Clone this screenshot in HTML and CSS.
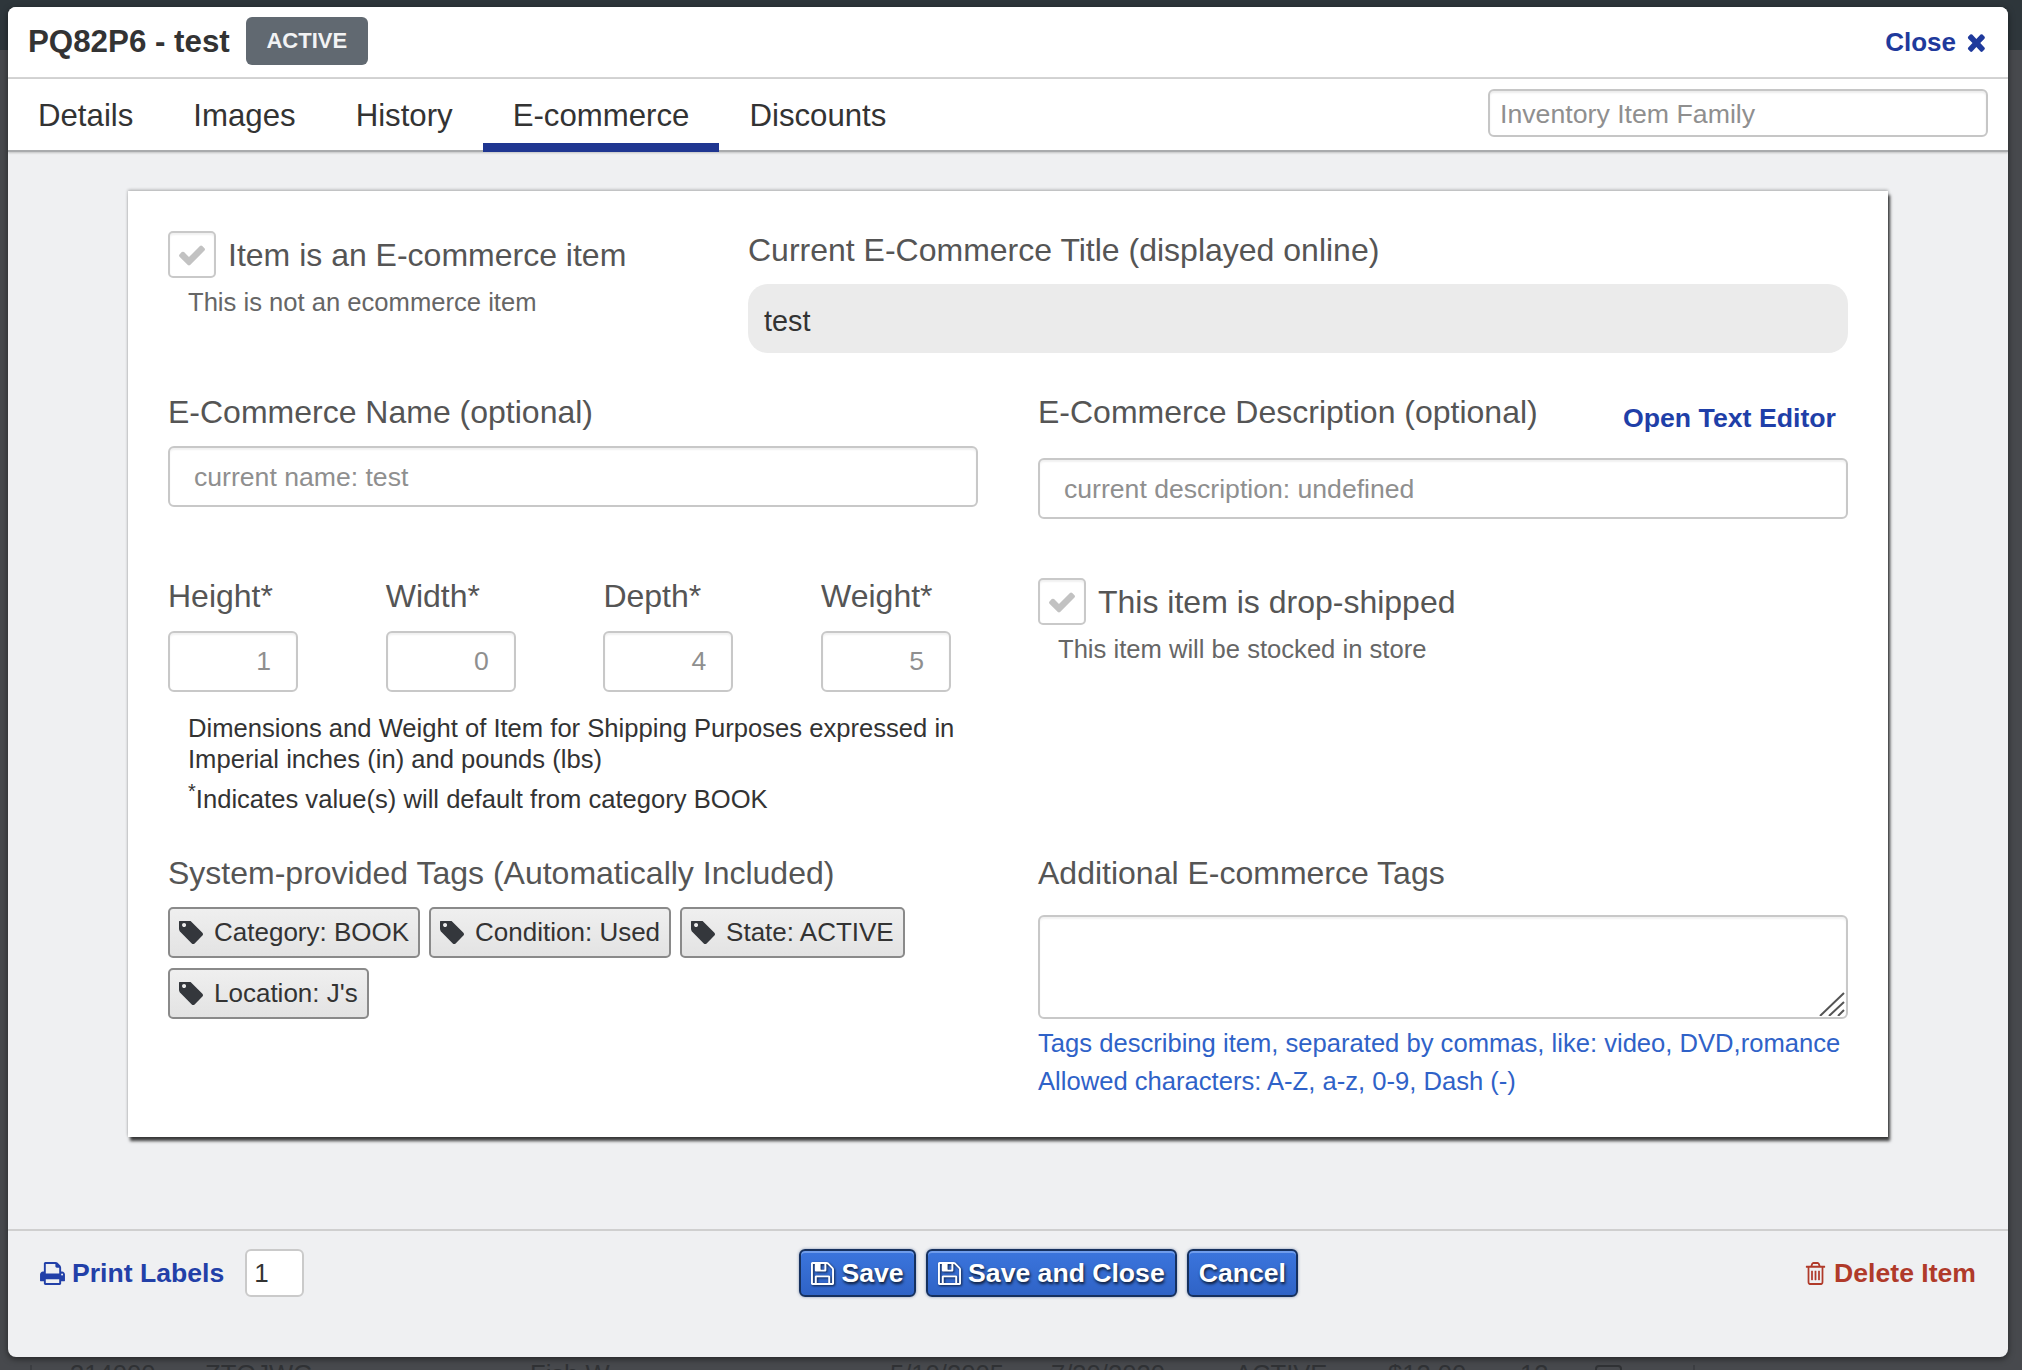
FILE: index.html
```html
<!DOCTYPE html>
<html lang="en">
<head>
  <meta charset="UTF-8">
  <meta name="viewport" content="width=device-width, initial-scale=1.0">
  <link rel="stylesheet" href="styles.css">
  <title>PQ82P6 - test</title>
</head>
<body>
  <!-- page behind the modal -->
  <div class="backdrop">
    <div class="topbar"></div>
    <div class="listRow">
      <span class="cellId">314000</span>
      <span class="cellSku">ZTQJWG</span>
      <span class="cellName">Fish W</span>
      <span class="cellDate">5/10/2005</span>
      <span class="cellDate2">7/30/2020</span>
      <span class="cellState">ACTIVE</span>
      <span class="cellPrice">$12.00</span>
      <span class="cellQty">12</span>
      <span class="cellBox"></span>
    </div>
  </div>

  <div class="modal">
    <div class="modalHeader">
      <h1 class="itemTitle">PQ82P6 - test</h1>
      <span class="badge">ACTIVE</span>
      <a class="closeLink">Close
        <svg class="icon closeIcon" viewBox="240 290 1260 1270" preserveAspectRatio="none"><path d="M1490 1322q0 40-28 68l-136 136q-28 28-68 28t-68-28l-294-294-294 294q-28 28-68 28t-68-28l-136-136q-28-28-28-68t28-68l294-294-294-294q-28-28-28-68t28-68l136-136q28-28 68-28t68 28l294 294 294-294q28-28 68-28t68 28l136 136q28 28 28 68t-28 68l-294 294 294 294q28 28 28 68z"/></svg>
      </a>
    </div>

    <div class="tabBar">
      <a class="tab">Details</a>
      <a class="tab">Images</a>
      <a class="tab">History</a>
      <a class="tab active">E-commerce</a>
      <a class="tab">Discounts</a>
      <input class="familyInput" placeholder="Inventory Item Family" type="text">
    </div>

    <div class="modalBody">
      <div class="card">
        <div class="topRow">
          <div>
            <div class="checkRow">
              <span class="checkBox">
                <svg class="icon" viewBox="0 0 1792 1792"><path d="M1671 566q0 40-28 68l-724 724-136 136q-28 28-68 28t-68-28l-136-136-362-362q-28-28-28-68t28-68l136-136q28-28 68-28t68 28l294 295 656-657q28-28 68-28t68 28l136 136q28 28 28 68z"/></svg>
              </span>
              <span class="fieldLabel">Item is an E-commerce item</span>
            </div>
            <div class="checkNote">This is not an ecommerce item</div>
          </div>
          <div class="titleCol">
            <div class="fieldLabel">Current E-Commerce Title (displayed online)</div>
            <div class="readonlyTitle">test</div>
          </div>
        </div>

        <div class="formGrid">
          <div class="nameCol">
            <div class="fieldLabel">E-Commerce Name (optional)</div>
            <input class="textInput nameInput" placeholder="current name: test" type="text">
          </div>
          <div class="descCol">
            <div class="descHead">
              <span class="fieldLabel">E-Commerce Description (optional)</span>
              <a class="editorLink">Open Text Editor</a>
            </div>
            <input class="textInput" placeholder="current description: undefined" type="text">
          </div>

          <div class="dimsCol">
            <div class="dims">
              <div>
                <div class="fieldLabel">Height*</div>
                <input class="dimInput" placeholder="1" type="text">
              </div>
              <div>
                <div class="fieldLabel">Width*</div>
                <input class="dimInput" placeholder="0" type="text">
              </div>
              <div>
                <div class="fieldLabel">Depth*</div>
                <input class="dimInput" placeholder="4" type="text">
              </div>
              <div>
                <div class="fieldLabel">Weight*</div>
                <input class="dimInput" placeholder="5" type="text">
              </div>
            </div>
            <p class="dimsNote">Dimensions and Weight of Item for Shipping Purposes expressed in Imperial inches (in) and pounds (lbs)</p>
            <p class="dimsDefault"><sup>*</sup>Indicates value(s) will default from category BOOK</p>
          </div>
          <div class="shipCol">
            <div class="checkRow">
              <span class="checkBox">
                <svg class="icon" viewBox="0 0 1792 1792"><path d="M1671 566q0 40-28 68l-724 724-136 136q-28 28-68 28t-68-28l-136-136-362-362q-28-28-28-68t28-68l136-136q28-28 68-28t68 28l294 295 656-657q28-28 68-28t68 28l136 136q28 28 28 68z"/></svg>
              </span>
              <span class="fieldLabel">This item is drop-shipped</span>
            </div>
            <div class="checkNote">This item will be stocked in store</div>
          </div>

          <div class="tagsCol">
            <div class="fieldLabel">System-provided Tags (Automatically Included)</div>
            <div class="chips">
              <span class="chip"><svg class="icon" viewBox="128 192 1515 1452"><path d="M576 448q0-53-37.500-90.500t-90.500-37.500-90.500 37.500-37.500 90.500 37.500 90.500 90.500 37.500 90.500-37.500 37.500-90.500zm1067 576q0 53-37 90l-491 492q-39 37-91 37-53 0-90-37l-715-716q-38-37-64.500-101t-26.500-117v-416q0-52 38-90t90-38h416q53 0 117 26.500t102 64.500l715 714q37 39 37 91z"/></svg>Category: BOOK</span>
              <span class="chip"><svg class="icon" viewBox="128 192 1515 1452"><path d="M576 448q0-53-37.500-90.500t-90.500-37.500-90.500 37.500-37.500 90.500 37.500 90.500 90.500 37.500 90.500-37.500 37.500-90.500zm1067 576q0 53-37 90l-491 492q-39 37-91 37-53 0-90-37l-715-716q-38-37-64.500-101t-26.500-117v-416q0-52 38-90t90-38h416q53 0 117 26.500t102 64.500l715 714q37 39 37 91z"/></svg>Condition: Used</span>
              <span class="chip"><svg class="icon" viewBox="128 192 1515 1452"><path d="M576 448q0-53-37.500-90.500t-90.500-37.500-90.500 37.500-37.500 90.500 37.500 90.500 90.500 37.500 90.500-37.500 37.500-90.500zm1067 576q0 53-37 90l-491 492q-39 37-91 37-53 0-90-37l-715-716q-38-37-64.500-101t-26.500-117v-416q0-52 38-90t90-38h416q53 0 117 26.500t102 64.500l715 714q37 39 37 91z"/></svg>State: ACTIVE</span>
              <span class="chip"><svg class="icon" viewBox="128 192 1515 1452"><path d="M576 448q0-53-37.500-90.500t-90.500-37.500-90.500 37.500-37.500 90.500 37.500 90.500 90.500 37.500 90.500-37.500 37.500-90.500zm1067 576q0 53-37 90l-491 492q-39 37-91 37-53 0-90-37l-715-716q-38-37-64.500-101t-26.500-117v-416q0-52 38-90t90-38h416q53 0 117 26.500t102 64.500l715 714q37 39 37 91z"/></svg>Location: J's</span>
            </div>
          </div>
          <div class="tagsCol">
            <div class="fieldLabel">Additional E-commerce Tags</div>
            <div class="tagsBox">
              <textarea class="tagsArea"></textarea>
              <svg class="resizeGrip" viewBox="0 0 26 24"><path d="M1 24L25 1M10 24L25 10M19 24L25 18"/></svg>
            </div>
            <div class="tagsHelp">Tags describing item, separated by commas, like: video, DVD,romance</div>
            <div class="tagsHelp">Allowed characters: A-Z, a-z, 0-9, Dash (-)</div>
          </div>
        </div>
      </div>
    </div>

    <div class="modalFooter">
      <div class="printBlock">
        <a class="printLink">
          <svg class="icon" viewBox="64 128 1664 1536"><path d="M448 1536h896v-256h-896v256zm0-640h896v-384h-160q-40 0-68-28t-28-68v-160h-640v640zm1152 64q0-26-19-45t-45-19-45 19-19 45 19 45 45 19 45-19 19-45zm128 0v416q0 13-9.500 22.500t-22.500 9.500h-224v160q0 40-28 68t-68 28h-960q-40 0-68-28t-28-68v-160h-224q-13 0-22.500-9.500t-9.500-22.500v-416q0-79 56.500-135.500t135.500-56.500h64v-544q0-40 28-68t68-28h672q40 0 88 20t76 48l152 152q28 28 48 76t20 88v256h64q79 0 135.500 56.500t56.500 135.500z"/></svg>
          Print Labels
        </a>
        <input class="labelCount" value="1" type="text">
      </div>
      <div class="actions">
        <button class="actionBtn">
          <svg class="icon" viewBox="128 128 1536 1536"><path d="M512 1536h768v-384h-768v384zm896 0h128v-896q0-14-10-38.500t-20-34.500l-281-281q-10-10-34-20t-39-10v416q0 40-28 68t-68 28h-576q-40 0-68-28t-28-68v-416h-128v1280h128v-416q0-40 28-68t68-28h832q40 0 68 28t28 68v416zm-384-928v-320q0-13-9.500-22.500t-22.500-9.500h-192q-13 0-22.500 9.500t-9.500 22.500v320q0 13 9.500 22.500t22.500 9.500h192q13 0 22.500-9.500t9.500-22.500zm640 32v928q0 40-28 68t-68 28h-1344q-40 0-68-28t-28-68v-1344q0-40 28-68t68-28h928q40 0 88 20t76 48l280 280q28 28 48 76t20 88z"/></svg>
          Save
        </button>
        <button class="actionBtn">
          <svg class="icon" viewBox="128 128 1536 1536"><path d="M512 1536h768v-384h-768v384zm896 0h128v-896q0-14-10-38.500t-20-34.500l-281-281q-10-10-34-20t-39-10v416q0 40-28 68t-68 28h-576q-40 0-68-28t-28-68v-416h-128v1280h128v-416q0-40 28-68t68-28h832q40 0 68 28t28 68v416zm-384-928v-320q0-13-9.500-22.500t-22.500-9.500h-192q-13 0-22.500 9.500t-9.500 22.500v320q0 13 9.500 22.500t22.500 9.500h192q13 0 22.500-9.500t9.500-22.500zm640 32v928q0 40-28 68t-68 28h-1344q-40 0-68-28t-28-68v-1344q0-40 28-68t68-28h928q40 0 88 20t76 48l280 280q28 28 48 76t20 88z"/></svg>
          Save and Close
        </button>
        <button class="actionBtn">Cancel</button>
      </div>
      <a class="deleteLink">
        <svg class="icon" viewBox="128 128 1536 1536" preserveAspectRatio="none"><path d="M704 736v576q0 14-9 23t-23 9h-64q-14 0-23-9t-9-23v-576q0-14 9-23t23-9h64q14 0 23 9t9 23zm256 0v576q0 14-9 23t-23 9h-64q-14 0-23-9t-9-23v-576q0-14 9-23t23-9h64q14 0 23 9t9 23zm256 0v576q0 14-9 23t-23 9h-64q-14 0-23-9t-9-23v-576q0-14 9-23t23-9h64q14 0 23 9t9 23zm128 724v-948h-896v948q0 22 7 40.500t14.500 27 10.500 8.500h832q3 0 10.500-8.500t14.500-27 7-40.500zm-672-1076h448l-48-117q-7-9-17-11h-317q-10 2-17 11zm928 32v64q0 14-9 23t-23 9h-96v948q0 83-47 143.500t-113 60.500h-832q-66 0-113-58.500t-47-141.500v-952h-96q-14 0-23-9t-9-23v-64q0-14 9-23t23-9h309l70-167q15-37 54-63t79-26h320q40 0 79 26t54 63l70 167h309q14 0 23 9t9 23z"/></svg>
        Delete Item
      </a>
    </div>
  </div>
</body>
</html>
```

FILE: styles.css
```css
* {
  box-sizing: border-box;
}
html, body {
  margin: 0;
  height: 100%;
  overflow: hidden;
}
body {
  font-family: "Liberation Sans", Arial, sans-serif;
  font-size: 25.6px;
  color: #333;
  background: #47494d;
}
.icon {
  fill: currentColor;
  display: inline-block;
  flex: none;
}

/* page behind the modal */
.backdrop {
  height: 1370px;
  display: flex;
  flex-direction: column;
  justify-content: space-between;
  overflow: hidden;
}
.topbar {
  height: 50px;
  background: #2e363b;
}
.listRow {
  height: 5px;
  margin-left: 30px;
  margin-right: 327px;
  border-left: 2px solid #3c3e42;
  border-right: 2px solid #3c3e42;
  color: #303235;
  white-space: nowrap;
  display: flex;
  line-height: 19px;
}
.cellId { margin-left: 38px; width: 135px; }
.cellSku { width: 325px; }
.cellName { width: 360px; }
.cellDate { width: 161px; }
.cellDate2 { width: 184px; }
.cellState { width: 153px; }
.cellPrice { width: 132px; }
.cellQty { width: 75px; }
.cellBox {
  width: 27px;
  height: 30px;
  border: 2px solid #303235;
  border-radius: 4px;
}

/* modal */
.modal {
  position: absolute;
  left: 8px;
  top: 7px;
  width: 2000px;
  height: 1350px;
  display: flex;
  flex-direction: column;
  background: #eff0f2;
  border-radius: 8px;
  overflow: hidden;
  box-shadow: 0 2px 6px rgba(0, 0, 0, .5);
}
.modalHeader {
  height: 72px;
  display: flex;
  align-items: center;
  padding-left: 20px;
  padding-right: 23px;
  background: #fff;
  border-bottom: 2px solid #d4d4d4;
}
.itemTitle {
  margin: 0;
  font-size: 31.3px;
  font-weight: bold;
  color: #333;
  margin-right: 16px;
}
.badge {
  width: 122px;
  height: 48px;
  margin-bottom: 2px;
  line-height: 48px;
  text-align: center;
  background: #616971;
  color: #f2f3f4;
  border-radius: 6px;
  font-size: 22px;
  font-weight: bold;
}
.closeLink {
  margin-left: auto;
  display: flex;
  align-items: center;
  gap: 11px;
  color: #1f3a9c;
  font-size: 26px;
  font-weight: bold;
}
.closeIcon {
  width: 18px;
  height: 19px;
}

.tabBar {
  height: 73px;
  display: flex;
  background: #fff;
  border-bottom: 2px solid #a9abad;
  box-shadow: 0 1px 2px rgba(0, 0, 0, .2);
  position: relative;
}
.tab {
  padding: 0 30px;
  font-size: 31.2px;
  line-height: 74px;
  height: 73px;
  color: #333;
}
.tab.active {
  border-bottom: 9px solid #1f3691;
}
.familyInput {
  margin-left: auto;
  margin-right: 20px;
  margin-top: 10px;
  width: 500px;
  height: 48px;
  padding: 2px 10px 0;
  font-family: inherit;
  font-size: 26.7px;
  background: #fff;
  border: 2px solid #c6c6c6;
  border-radius: 6px;
  box-shadow: inset 0 2px 2px rgba(0, 0, 0, .08);
}
::placeholder {
  color: #8f8f8f;
  opacity: 1;
}

.modalBody {
  flex: 1;
  padding: 39px 120px 0;
}
.card {
  background: #fff;
  padding: 40px 40px 0;
  height: 946px;
  box-shadow: 2px 4px 3px rgba(0, 0, 0, .75), 0 -1px 3px rgba(0, 0, 0, .3);
}
.fieldLabel {
  font-size: 32px;
  line-height: 40px;
  color: #555;
}

.topRow {
  display: grid;
  grid-template-columns: 580px 1100px;
}
.titleCol {
  margin-top: -1px;
}
.checkRow {
  display: flex;
  align-items: center;
  gap: 12px;
}
.checkBox {
  width: 48px;
  height: 47px;
  display: flex;
  align-items: center;
  justify-content: center;
  border: 2px solid #c9c9c9;
  border-radius: 5px;
  color: #c2c2c2;
  box-shadow: inset 0 2px 2px rgba(0, 0, 0, .06);
}
.checkBox .icon {
  width: 30px;
  height: 30px;
}
.checkNote {
  margin-top: 9px;
  padding-left: 20px;
  line-height: 30px;
  color: #666;
}
.readonlyTitle {
  margin-top: 14px;
  height: 69px;
  line-height: 74px;
  padding-left: 16px;
  font-size: 28.8px;
  background: #ebebeb;
  border-radius: 20px;
  color: #333;
}

.formGrid {
  display: grid;
  grid-template-columns: 810px 810px;
  column-gap: 60px;
  margin-top: 39px;
}
.nameInput {
  margin-top: 14px;
}
.textInput {
  display: block;
  width: 100%;
  height: 61px;
  padding: 2px 24px 0;
  font-family: inherit;
  font-size: 26.6px;
  border: 2px solid #c8c8c8;
  border-radius: 6px;
  box-shadow: inset 0 2px 2px rgba(0, 0, 0, .06);
}
.descHead {
  display: flex;
  justify-content: space-between;
  height: 66px;
}
.editorLink {
  margin-top: 6px;
  padding-right: 12px;
  line-height: 40px;
  font-size: 26.7px;
  font-weight: bold;
  color: #1f3fa8;
}

.dimsCol {
  margin-top: 57px;
}
.shipCol {
  margin-top: 59px;
}
.dims {
  display: grid;
  grid-template-columns: repeat(4, 217.7px);
}
.dimInput {
  display: block;
  width: 130px;
  height: 61px;
  margin-top: 15px;
  padding: 0 25px;
  text-align: right;
  font-family: inherit;
  font-size: 26.6px;
  border: 2px solid #c8c8c8;
  border-radius: 6px;
  box-shadow: inset 0 2px 2px rgba(0, 0, 0, .06);
}
.dimsNote {
  margin: 21px 0 0;
  padding-left: 20px;
  line-height: 31px;
}
.dimsDefault {
  margin: 9px 0 0;
  padding-left: 20px;
  line-height: 31px;
}
.dimsDefault sup {
  font-size: 20px;
  line-height: 0;
}

.tagsCol {
  margin-top: 38px;
}
.chips {
  display: flex;
  flex-wrap: wrap;
  gap: 10px 9px;
  margin-top: 14px;
}
.chip {
  height: 51px;
  display: flex;
  align-items: center;
  gap: 11px;
  padding: 0 9px;
  font-size: 26px;
  color: #333;
  background: linear-gradient(#efefef, #e3e3e3);
  border: 2px solid #8a8a8a;
  border-radius: 5px;
}
.chip .icon {
  width: 24px;
  height: 23px;
  color: #34373c;
}
.tagsBox {
  position: relative;
  margin-top: 22px;
  height: 104px;
}
.tagsArea {
  display: block;
  width: 100%;
  height: 100%;
  resize: none;
  border: 2px solid #c8c8c8;
  border-radius: 6px;
  box-shadow: inset 0 2px 2px rgba(0, 0, 0, .06);
}
.resizeGrip {
  position: absolute;
  right: 3px;
  bottom: 3px;
  width: 26px;
  height: 24px;
  fill: none;
  stroke: #555;
  stroke-width: 2;
}
.tagsHelp {
  color: #2f62c8;
  line-height: 38px;
}
.tagsBox + .tagsHelp {
  margin-top: 5px;
}

/* footer */
.modalFooter {
  height: 128px;
  display: flex;
  align-items: flex-start;
  padding: 18px 32px 0;
  border-top: 2px solid #cfcfcf;
  font-size: 26.6px;
  font-weight: bold;
}
.printBlock {
  width: 759px;
  display: flex;
  align-items: center;
  height: 48px;
}
.printLink {
  display: flex;
  align-items: center;
  gap: 7px;
  color: #2240a8;
}
.printLink .icon {
  width: 25px;
  height: 23px;
}
.labelCount {
  margin-left: 21px;
  width: 59px;
  height: 48px;
  padding: 0 7px;
  font-family: inherit;
  font-size: 26px;
  color: #333;
  border: 2px solid #cacaca;
  border-radius: 6px;
}
.actions {
  display: flex;
  gap: 10px;
}
.actionBtn {
  height: 48px;
  display: flex;
  align-items: center;
  gap: 7.5px;
  padding: 0 10px;
  font-family: inherit;
  font-size: 26.6px;
  font-weight: bold;
  color: #fff;
  text-shadow: 1px 2px 3px rgba(0, 0, 0, .8);
  background: linear-gradient(#3b75dd, #2f63c6);
  border: 2px solid #15305e;
  border-radius: 6px;
  box-shadow: inset 0 2px 0 #6f9ceb, 0 0 3px rgba(30, 60, 120, .5);
}
.actionBtn .icon {
  width: 23px;
  height: 23px;
  filter: drop-shadow(1px 1px 1px rgba(0, 0, 0, .7));
}
.deleteLink {
  margin-left: auto;
  height: 48px;
  display: flex;
  align-items: center;
  gap: 8px;
  color: #b03a2a;
}
.deleteLink .icon {
  width: 21px;
  height: 23px;
}
```
